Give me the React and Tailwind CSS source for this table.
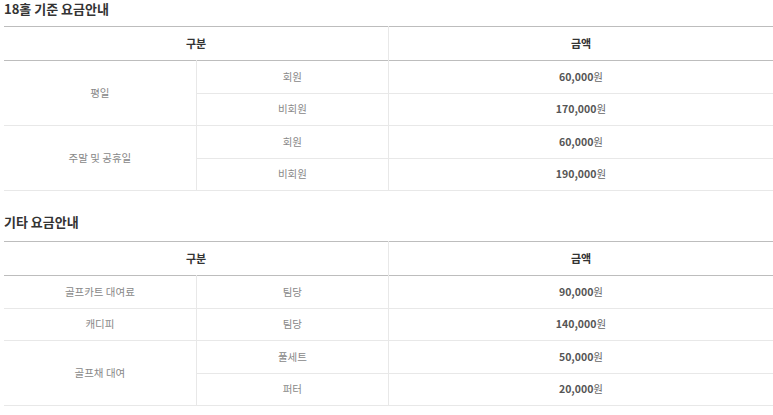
const font = { fontFamily: '"Noto Sans CJK KR", "Noto Sans", sans-serif' };

const green = [
  { label: '평일', rows: [['회원', '60,000'], ['비회원', '170,000']] },
  { label: '주말 및 공휴일', rows: [['회원', '60,000'], ['비회원', '190,000']] },
];

const etc = [
  { label: '골프카트 대여료', rows: [['팀당', '90,000']] },
  { label: '캐디피', rows: [['팀당', '140,000']] },
  { label: '골프채 대여', rows: [['풀세트', '50,000'], ['퍼터', '20,000']] },
];

function PriceTable({ groups }) {
  return (
    <table className="w-full border-collapse table-fixed border-t border-t-[#bdbdbd]">
      <colgroup>
        <col className="w-1/4" />
        <col className="w-1/4" />
        <col className="w-1/2" />
      </colgroup>
      <thead>
        <tr className="h-[34px] border-b border-b-[#bdbdbd]">
          <th colSpan={2} className="p-0 text-[11px] font-bold text-[#333] border-r border-r-[#e8e8e8]">구분</th>
          <th className="p-0 text-[11px] font-bold text-[#333]">금액</th>
        </tr>
      </thead>
      <tbody>
        {groups.map((g) =>
          g.rows.map((r, i) => (
            <tr key={g.label + i} className="h-[32.5px] border-b border-b-[#e8e8e8]">
              {i === 0 && (
                <td rowSpan={g.rows.length} className="p-0 text-center text-[10.5px] text-[#888] border-r border-r-[#e8e8e8]">
                  {g.label}
                </td>
              )}
              <td className="p-0 text-center text-[10.5px] text-[#888] border-r border-r-[#e8e8e8]">{r[0]}</td>
              <td className="p-0 text-center text-[10.5px] text-[#666]">
                <span className="font-bold text-[#555]">{r[1]}</span>원
              </td>
            </tr>
          ))
        )}
      </tbody>
    </table>
  );
}

export default function App() {
  return (
    <div className="w-[773px] h-[415px] bg-white pl-1 overflow-hidden" style={font}>
      <h2 className="text-[13px] font-bold text-[#333] h-[18px] leading-[18px] mb-2">18홀 기준 요금안내</h2>
      <PriceTable groups={green} />
      <h2 className="text-[13px] font-bold text-[#333] h-[18px] leading-[18px] mt-[22px] mb-[10px]">기타 요금안내</h2>
      <PriceTable groups={etc} />
    </div>
  );
}
